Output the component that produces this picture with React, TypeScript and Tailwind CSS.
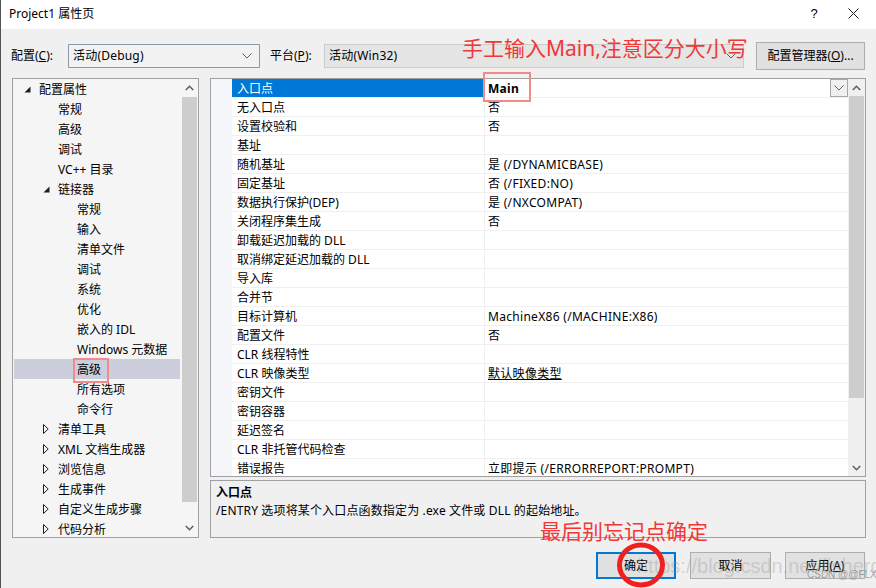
import React from "react";

const TREE: { t: string; lvl: number; exp?: "open" | "closed"; sel?: boolean }[] = [
  { t: "配置属性", lvl: 0, exp: "open" },
  { t: "常规", lvl: 1 },
  { t: "高级", lvl: 1 },
  { t: "调试", lvl: 1 },
  { t: "VC++ 目录", lvl: 1 },
  { t: "链接器", lvl: 1, exp: "open" },
  { t: "常规", lvl: 2 },
  { t: "输入", lvl: 2 },
  { t: "清单文件", lvl: 2 },
  { t: "调试", lvl: 2 },
  { t: "系统", lvl: 2 },
  { t: "优化", lvl: 2 },
  { t: "嵌入的 IDL", lvl: 2 },
  { t: "Windows 元数据", lvl: 2 },
  { t: "高级", lvl: 2, sel: true },
  { t: "所有选项", lvl: 2 },
  { t: "命令行", lvl: 2 },
  { t: "清单工具", lvl: 1, exp: "closed" },
  { t: "XML 文档生成器", lvl: 1, exp: "closed" },
  { t: "浏览信息", lvl: 1, exp: "closed" },
  { t: "生成事件", lvl: 1, exp: "closed" },
  { t: "自定义生成步骤", lvl: 1, exp: "closed" },
  { t: "代码分析", lvl: 1, exp: "closed" },
];

const GRID: [string, string][] = [
  ["入口点", "Main"],
  ["无入口点", "否"],
  ["设置校验和", "否"],
  ["基址", ""],
  ["随机基址", "是 (/DYNAMICBASE)"],
  ["固定基址", "否 (/FIXED:NO)"],
  ["数据执行保护(DEP)", "是 (/NXCOMPAT)"],
  ["关闭程序集生成", "否"],
  ["卸载延迟加载的 DLL", ""],
  ["取消绑定延迟加载的 DLL", ""],
  ["导入库", ""],
  ["合并节", ""],
  ["目标计算机", "MachineX86 (/MACHINE:X86)"],
  ["配置文件", "否"],
  ["CLR 线程特性", ""],
  ["CLR 映像类型", "默认映像类型"],
  ["密钥文件", ""],
  ["密钥容器", ""],
  ["延迟签名", ""],
  ["CLR 非托管代码检查", ""],
  ["错误报告", "立即提示 (/ERRORREPORT:PROMPT)"],
];

const LVL_PAD = ["pl-[8px]", "pl-[27px]", "pl-[46px]"];

function ChevDown({ className = "" }: { className?: string }) {
  return (
    <svg width="10" height="6" viewBox="0 0 10 6" className={className}>
      <polyline points="0.5,0.5 5,5 9.5,0.5" fill="none" stroke="#606060" strokeWidth="1" />
    </svg>
  );
}

function ScrollUp() {
  return (
    <svg width="9" height="6" viewBox="0 0 9 6">
      <polyline points="0.8,5 4.5,1.3 8.2,5" fill="none" stroke="#606060" strokeWidth="1.6" />
    </svg>
  );
}
function ScrollDown() {
  return (
    <svg width="9" height="6" viewBox="0 0 9 6">
      <polyline points="0.8,1 4.5,4.7 8.2,1" fill="none" stroke="#606060" strokeWidth="1.6" />
    </svg>
  );
}

function Tri({ exp }: { exp?: "open" | "closed" }) {
  if (exp === "open")
    return (
      <svg width="7" height="7" viewBox="0 0 7 7">
        <path d="M6.5 0.5 L6.5 6.5 L0.5 6.5 Z" fill="#1e1e1e" />
      </svg>
    );
  if (exp === "closed")
    return (
      <svg width="6" height="10" viewBox="0 0 6 10">
        <path d="M0.5 0.5 L5.2 5 L0.5 9.5 Z" fill="none" stroke="#1e1e1e" strokeWidth="1" />
      </svg>
    );
  return null;
}

export default function App() {
  return (
    <div className="relative w-[876px] h-[588px] overflow-hidden bg-[#f0f0f0] border-l border-[#555] text-[12px] text-black font-['Noto_Sans','Noto_Sans_CJK_SC',sans-serif]">
      {/* title bar */}
      <div className="h-[29px] bg-white flex items-center pl-[8px] pb-[2px]">
        <span className="flex-1 leading-[16px]">Project1 属性页</span>
        <span className="w-[20px] text-center text-[13px] mr-[24px] font-['Liberation_Sans',sans-serif]">?</span>
        <svg width="11" height="11" viewBox="0 0 11 11" className="mr-[17px]">
          <path d="M0.5 0.5 L10.5 10.5 M10.5 0.5 L0.5 10.5" stroke="#1e1e1e" strokeWidth="1" />
        </svg>
      </div>

      {/* toolbar */}
      <div className="flex items-center pl-[10px] mt-[13px] h-[28px]">
        <span className="w-[56px] leading-[16px]">
          配置(<span className="underline">C</span>):
        </span>
        <div className="w-[192px] h-[24px] ml-[1px] border border-[#8e9aa6] bg-[#f2f2f2] flex items-center pl-[4px] pr-[7px]">
          <span className="flex-1 tracking-[0.2px]">活动(Debug)</span>
          <ChevDown />
        </div>
        <span className="ml-[10px] w-[54px] leading-[16px]">
          平台(<span className="underline">P</span>):
        </span>
        <div className="w-[420px] h-[24px] border border-[#cccccc] bg-[#e5e5e5] flex items-center pl-[4px] pr-[7px]">
          <span className="flex-1 tracking-[0.2px]">活动(Win32)</span>
          <ChevDown />
        </div>
        <div className="ml-[12px] w-[109px] h-[28px] border border-[#adadad] bg-[#e1e1e1] flex items-center justify-center">
          配置管理器(<span className="underline">O</span>)...
        </div>
      </div>

      {/* main area */}
      <div className="flex mt-[8px] pl-[11px] h-[460px]">
        {/* tree */}
        <div className="w-[187px] h-[460px] border border-[#a0a0a0] bg-[#f5f5f5] flex">
          <div className="flex-1 pl-[1px] pr-[1px]">
            {TREE.map((n, i) => (
              <div
                key={i}
                className={`h-[20px] flex items-center ${LVL_PAD[n.lvl]} ${n.sel ? "bg-[#cccedb]" : ""}`}
              >
                <span className="w-[17px] flex items-center pl-[2px]">
                  <Tri exp={n.exp} />
                </span>
                <span className="leading-[16px] pt-[2px] whitespace-nowrap">{n.t}</span>
              </div>
            ))}
          </div>
          <div className="w-[17px] flex flex-col">
            <div className="h-[18px] flex items-center justify-center">
              <ScrollUp />
            </div>
            <div className="mx-[1px] h-[405px] bg-[#cdcdcd]" />
            <div className="flex-1" />
            <div className="h-[18px] flex items-center justify-center">
              <ScrollDown />
            </div>
          </div>
        </div>

        {/* right column */}
        <div className="ml-[11px] w-[656px] flex flex-col">
          <div className="h-[399px] border border-[#a0a0a0] bg-white flex overflow-hidden">
            <div className="w-[21px] bg-[#f5f6fa]" />
            <div className="flex-1 overflow-hidden">
              {GRID.map(([name, val], i) => (
                <div key={i} className="h-[19px] flex">
                  <div
                    className={`w-[252px] flex items-center pl-[5px] border-b border-[#f0f0f0] whitespace-nowrap ${
                      i === 0 ? "bg-[#0078d7] text-white border-[#0078d7]" : ""
                    }`}
                  >
                    <span className={`leading-[16px] ${i === 0 ? "pt-[1px]" : "pt-[2px]"}`}>{name}</span>
                  </div>
                  <div className="w-[1px] bg-[#f0f0f0]" />
                  <div className="flex-1 flex items-center pl-[3px] border-b border-[#f0f0f0] whitespace-nowrap">
                    <span
                      className={`leading-[16px] flex-1 tracking-[0.3px] ${
                        i === 0 ? "font-bold pt-[1px]" : "pt-[2px]"
                      }`}
                    >
                      {i === 15 ? <span className="underline">{val}</span> : val}
                    </span>
                    {i === 0 && (
                      <div className="w-[18px] h-[18px] border border-[#a8a8a8] bg-[#f0f0f0] flex items-center justify-center">
                        <ChevDown />
                      </div>
                    )}
                  </div>
                </div>
              ))}
            </div>
            <div className="w-[17px] bg-[#f0f0f0] flex flex-col">
              <div className="h-[17px] flex items-center justify-center">
                <ScrollUp />
              </div>
              <div className="mx-[1px] h-[302px] bg-[#cdcdcd]" />
              <div className="flex-1" />
              <div className="h-[17px] flex items-center justify-center">
                <ScrollDown />
              </div>
            </div>
          </div>

          <div className="mt-[3px] h-[58px] border border-[#a0a0a0] bg-[#f0f0f0] pl-[5px] pt-[3px]">
            <div className="font-bold leading-[18px]">入口点</div>
            <div className="leading-[18px] tracking-[0.15px]">
              /ENTRY 选项将某个入口点函数指定为 .exe 文件或 DLL 的起始地址。
            </div>
          </div>
        </div>
      </div>

      {/* buttons */}
      <div className="flex justify-end pr-[11px] mt-[14px] gap-[14px]">
        <div className="w-[80px] h-[27px] border-2 border-[#0078d7] bg-[#e1e1e1] flex items-center justify-center">
          确定
        </div>
        <div className="w-[81px] h-[27px] border border-[#adadad] bg-[#e1e1e1] flex items-center justify-center">
          取消
        </div>
        <div className="w-[80px] h-[27px] border border-[#adadad] bg-[#e1e1e1] flex items-center justify-center">
          应用(<span className="underline">A</span>)
        </div>
      </div>

      {/* annotations (overlay) */}
      <div className="absolute left-[461px] top-[34px] text-[21px] leading-[28px] text-[#f03838] whitespace-nowrap">
        手工输入Main,注意区分大小写
      </div>
      <div className="absolute left-[482px] top-[72px] w-[48px] h-[30px] border-2 border-[#f28a8a]" />
      <div className="absolute left-[72px] top-[358px] w-[36px] h-[25px] border-2 border-[#f28a8a]" />
      <div className="absolute left-[539px] top-[517px] text-[21px] leading-[28px] text-[#f03838] whitespace-nowrap">
        最后别忘记点确定
      </div>
      <div className="absolute left-[636px] top-[553px] text-[20px] leading-[26px] text-[rgba(150,150,150,0.35)] whitespace-nowrap font-['Liberation_Sans',sans-serif]">
        https://blog.csdn.net/fisherdingding
      </div>
      <div className="absolute left-[806px] top-[569px] text-[10px] leading-[12px] text-[rgba(110,110,110,0.6)] whitespace-nowrap font-['Liberation_Sans',sans-serif]">
        CSDN @@FLX
      </div>
      <svg className="absolute left-[614px] top-[541px]" width="52" height="48" viewBox="0 0 52 48">
        <ellipse cx="26" cy="24" rx="21.5" ry="20" fill="none" stroke="#ee2020" strokeWidth="5" />
      </svg>
    </div>
  );
}
